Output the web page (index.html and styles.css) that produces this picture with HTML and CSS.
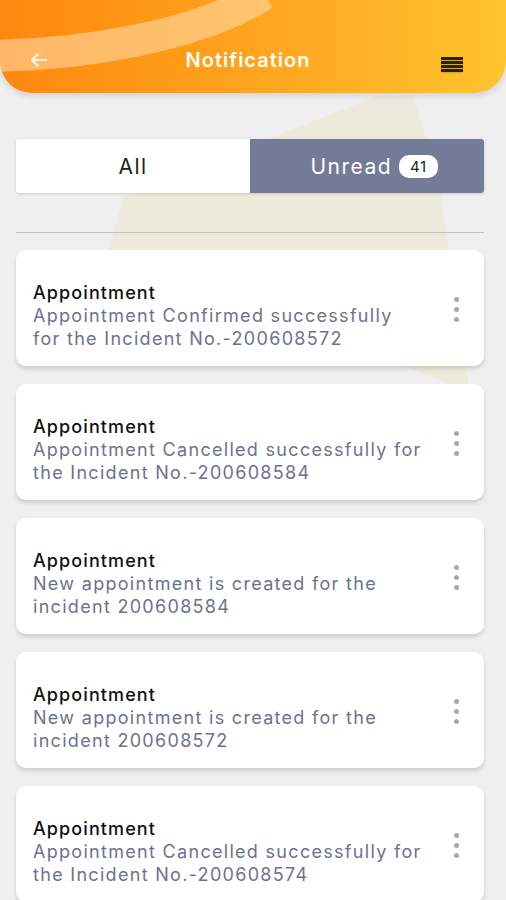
FILE: index.html
```html
<!DOCTYPE html>
<html lang="en">
<head>
    <meta charset="UTF-8">
    <meta name="viewport" content="width=device-width, initial-scale=1.0">
    <title>Notification</title>
    <link rel="stylesheet" href="styles.css">
</head>
<body>
    <div class="screen">
        <div class="bg-shape"></div>

        <header class="topbar">
            <svg class="arc" width="506" height="93" viewBox="0 0 506 93">
                <path d="M-20 56 C 80 56, 200 36, 264 -6" />
            </svg>
            <span class="back">
                <svg width="18" height="16" viewBox="0 0 18 16">
                    <path d="M16 8 H3 M8 2 L2 8 L8 14" />
                </svg>
            </span>
            <h1>Notification</h1>
            <span class="menu">
                <i></i><i></i><i></i><i></i>
            </span>
        </header>

        <div class="tabs">
            <button class="tab">All</button>
            <button class="tab active"><span class="tab-label">Unread <span class="badge">41</span></span></button>
        </div>

        <hr class="divider">

        <div class="list">
            <div class="card">
                <div class="card-text">
                    <div class="card-title">Appointment</div>
                    <div class="card-body">Appointment Confirmed successfully for the Incident No.-200608572</div>
                </div>
                <span class="dots"><i></i><i></i><i></i></span>
            </div>
            <div class="card">
                <div class="card-text">
                    <div class="card-title">Appointment</div>
                    <div class="card-body">Appointment Cancelled successfully for the Incident No.-200608584</div>
                </div>
                <span class="dots"><i></i><i></i><i></i></span>
            </div>
            <div class="card">
                <div class="card-text">
                    <div class="card-title">Appointment</div>
                    <div class="card-body">New appointment is created for the incident 200608584</div>
                </div>
                <span class="dots"><i></i><i></i><i></i></span>
            </div>
            <div class="card">
                <div class="card-text">
                    <div class="card-title">Appointment</div>
                    <div class="card-body">New appointment is created for the incident 200608572</div>
                </div>
                <span class="dots"><i></i><i></i><i></i></span>
            </div>
            <div class="card">
                <div class="card-text">
                    <div class="card-title">Appointment</div>
                    <div class="card-body">Appointment Cancelled successfully for the Incident No.-200608574</div>
                </div>
                <span class="dots"><i></i><i></i><i></i></span>
            </div>
        </div>
    </div>
</body>
</html>
```

FILE: styles.css
```css
body {
    margin: 0;
    background-color: #efefef;
    font-family: 'Inter', sans-serif;
}

.screen {
    position: relative;
    width: 506px;
    height: 900px;
    overflow: hidden;
}

/* faint yellow decoration behind the list */
.bg-shape {
    position: absolute;
    left: 0;
    top: 0;
    width: 506px;
    height: 420px;
    background-color: #ecebdb;
    clip-path: polygon(377px 96px, 414px 96px, 440px 190px, 456px 300px, 470px 392px, 108px 252px, 124px 196px);
}

.topbar {
    position: relative;
    height: 93px;
    background: linear-gradient(90deg, #ff870f 0%, #ffa41e 50%, #ffc42f 100%);
    border-radius: 0 0 32px 32px;
    box-shadow: 0 3px 6px rgba(0, 0, 0, 0.12);
    display: flex;
    align-items: center;
    justify-content: center;
    padding-top: 26px;
    box-sizing: border-box;
    overflow: hidden;
}

.arc {
    position: absolute;
    left: 0;
    top: 0;
}

.arc path {
    fill: none;
    stroke: rgba(255, 222, 175, 0.55);
    stroke-width: 32px;
}

.topbar h1 {
    position: relative;
    margin: 0 0 0 -10px;
    color: #fff;
    font-size: 20px;
    font-weight: 600;
    letter-spacing: 1px;
}

.back {
    position: absolute;
    left: 30px;
    top: 52px;
}

.back path {
    fill: none;
    stroke: #fff6ea;
    stroke-width: 2.2px;
    stroke-linecap: round;
    stroke-linejoin: round;
}

.menu {
    position: absolute;
    right: 43px;
    top: 57px;
    width: 22px;
    display: flex;
    flex-direction: column;
    gap: 1.5px;
}

.menu i {
    display: block;
    height: 2.5px;
    background-color: #2e2200;
    box-shadow: 0 1px 2px rgba(0, 0, 0, 0.15);
}

.tabs {
    position: relative;
    display: grid;
    grid-template-columns: 1fr 1fr;
    margin: 46px 22px 0 16px;
    height: 54px;
    border-radius: 3px;
    overflow: hidden;
    box-shadow: 0 1px 3px rgba(0, 0, 0, 0.15);
}

.tab {
    border: none;
    background-color: #fff;
    color: #222;
    font-family: 'Inter', sans-serif;
    font-size: 21px;
    letter-spacing: 1.5px;
    display: flex;
    align-items: center;
    justify-content: center;
    padding: 0;
}

.tab.active {
    background-color: #737b97;
    color: #fff;
}

.tab-label {
    display: flex;
    align-items: center;
    gap: 7px;
    margin-left: 14px;
}

.badge {
    background-color: #fff;
    color: #222;
    font-size: 15px;
    letter-spacing: 0.5px;
    border-radius: 10px;
    padding: 0 11px;
    line-height: 23px;
}

.divider {
    position: relative;
    margin: 39px 22px 0 16px;
    border: none;
    border-top: 1px solid #c4c4c4;
}

.list {
    position: relative;
    margin: 17px 22px 0 16px;
    display: flex;
    flex-direction: column;
    gap: 18px;
}

.card {
    background-color: #fff;
    border-radius: 10px;
    box-shadow: 0 3px 4px rgba(0, 0, 0, 0.14);
    height: 116px;
    box-sizing: border-box;
    padding: 31px 25px 0 17px;
    display: flex;
    align-items: flex-start;
    justify-content: space-between;
}

.card-text {
    width: 393px;
    font-size: 18px;
    line-height: 23px;
    letter-spacing: 1.3px;
}

.card-title {
    color: #111;
    font-weight: 500;
    letter-spacing: 1.1px;
}

.card-body {
    color: #6c7290;
}

.dots {
    display: flex;
    flex-direction: column;
    gap: 5px;
    margin-top: 16px;
}

.dots i {
    display: block;
    width: 5px;
    height: 5px;
    border-radius: 50%;
    background-color: #a9a9a9;
}
```
